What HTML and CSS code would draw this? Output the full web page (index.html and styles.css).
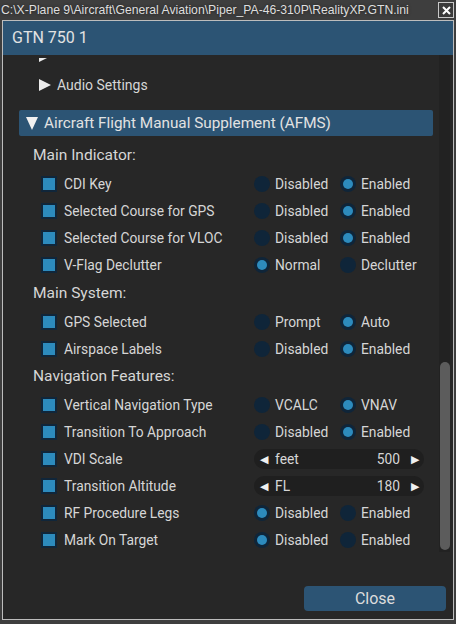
FILE: index.html
```html
<!DOCTYPE html>
<html lang="en">
<head>
    <meta charset="UTF-8">
    <meta name="viewport" content="width=device-width, initial-scale=1.0">
    <title>GTN 750 1</title>
    <link rel="stylesheet" href="styles.css">
</head>
<body>
    <div class="titlebar">
        <span class="path">C:\X-Plane 9\Aircraft\General Aviation\Piper_PA-46-310P\RealityXP.GTN.ini</span>
        <span class="winclose">
            <svg width="9" height="9" viewBox="0 0 9 9"><path d="M1 1 L8 8 M8 1 L1 8" stroke="#fff" stroke-width="2"/></svg>
        </span>
    </div>

    <div class="window">
        <div class="header">GTN 750 1</div>

        <div class="main">
            <div class="viewport">
                <div class="list">
                    <div class="tree-item"><span class="tri-right"></span></div>
                    <div class="tree-item"><span class="tri-right"></span>Audio Settings</div>

                    <div class="group-bar"><span class="tri-down"></span>Aircraft Flight Manual Supplement (AFMS)</div>

                    <div class="section first">Main Indicator:</div>
                    <div class="row">
                        <span class="check"></span><span class="label">CDI Key</span>
                        <span class="opt"><span class="radio"></span>Disabled</span>
                        <span class="opt"><span class="radio on"></span>Enabled</span>
                    </div>
                    <div class="row">
                        <span class="check"></span><span class="label">Selected Course for GPS</span>
                        <span class="opt"><span class="radio"></span>Disabled</span>
                        <span class="opt"><span class="radio on"></span>Enabled</span>
                    </div>
                    <div class="row">
                        <span class="check"></span><span class="label">Selected Course for VLOC</span>
                        <span class="opt"><span class="radio"></span>Disabled</span>
                        <span class="opt"><span class="radio on"></span>Enabled</span>
                    </div>
                    <div class="row">
                        <span class="check"></span><span class="label">V-Flag Declutter</span>
                        <span class="opt"><span class="radio on"></span>Normal</span>
                        <span class="opt"><span class="radio"></span>Declutter</span>
                    </div>

                    <div class="section">Main System:</div>
                    <div class="row">
                        <span class="check"></span><span class="label">GPS Selected</span>
                        <span class="opt"><span class="radio"></span>Prompt</span>
                        <span class="opt"><span class="radio on"></span>Auto</span>
                    </div>
                    <div class="row">
                        <span class="check"></span><span class="label">Airspace Labels</span>
                        <span class="opt"><span class="radio"></span>Disabled</span>
                        <span class="opt"><span class="radio on"></span>Enabled</span>
                    </div>

                    <div class="section">Navigation Features:</div>
                    <div class="row">
                        <span class="check"></span><span class="label">Vertical Navigation Type</span>
                        <span class="opt"><span class="radio"></span>VCALC</span>
                        <span class="opt"><span class="radio on"></span>VNAV</span>
                    </div>
                    <div class="row">
                        <span class="check"></span><span class="label">Transition To Approach</span>
                        <span class="opt"><span class="radio"></span>Disabled</span>
                        <span class="opt"><span class="radio on"></span>Enabled</span>
                    </div>
                    <div class="row">
                        <span class="check"></span><span class="label">VDI Scale</span>
                        <span class="spinner">
                            <span class="arrow">&#9664;</span><span class="unit">feet</span>
                            <span class="value">500</span><span class="arrow">&#9654;</span>
                        </span>
                    </div>
                    <div class="row">
                        <span class="check"></span><span class="label">Transition Altitude</span>
                        <span class="spinner">
                            <span class="arrow">&#9664;</span><span class="unit">FL</span>
                            <span class="value">180</span><span class="arrow">&#9654;</span>
                        </span>
                    </div>
                    <div class="row">
                        <span class="check"></span><span class="label">RF Procedure Legs</span>
                        <span class="opt"><span class="radio on"></span>Disabled</span>
                        <span class="opt"><span class="radio"></span>Enabled</span>
                    </div>
                    <div class="row">
                        <span class="check"></span><span class="label">Mark On Target</span>
                        <span class="opt"><span class="radio on"></span>Disabled</span>
                        <span class="opt"><span class="radio"></span>Enabled</span>
                    </div>
                </div>
            </div>
            <div class="scrollbar"><div class="thumb"></div></div>
        </div>

        <div class="footer">
            <button class="close">Close</button>
        </div>
    </div>
</body>
</html>
```

FILE: styles.css
```css
* {
    margin: 0;
    padding: 0;
    box-sizing: border-box;
}
body {
    background-color: #3e3e3e;
    width: 456px;
    height: 624px;
    overflow: hidden;
    font-family: Roboto, "Noto Sans", sans-serif;
    color: #d6d6d6;
}

/* barra do windows */
.titlebar {
    height: 20px;
    display: flex;
    align-items: center;
    justify-content: space-between;
    padding-left: 1px;
}
.path {
    font-family: "Liberation Sans", Arial, sans-serif;
    font-size: 12.2px;
    color: #dedede;
    text-shadow: 0 0 3px #222;
}
.winclose {
    width: 16px;
    height: 16px;
    margin-right: 2px;
    border: 1px solid #c8c8c8;
    background-color: #3a3a3a;
    display: flex;
    align-items: center;
    justify-content: center;
}

.window {
    margin: 0 2px;
    height: 600px;
    border: 1px solid #bdbdbd;
    background-color: #272727;
    display: flex;
    flex-direction: column;
}
.header {
    height: 34px;
    background-color: #2c5474;
    font-size: 16px;
    line-height: 34px;
    padding-left: 9px;
    color: #e2e2e2;
}

.main {
    height: 497px;
    display: flex;
}
.viewport {
    flex: 1;
    margin-top: 3px;
    overflow: hidden;
}
.list {
    margin-top: -17px;
}

.tree-item {
    height: 29px;
    display: flex;
    align-items: center;
    padding-left: 36px;
    font-size: 14px;
}
.tri-right {
    width: 0;
    height: 0;
    border-top: 6px solid transparent;
    border-bottom: 6px solid transparent;
    border-left: 12px solid #ececec;
    margin-right: 6px;
}
.group-bar {
    margin: 11px 6px 0 16px;
    height: 26px;
    background-color: #2c5474;
    border-radius: 2px;
    display: flex;
    align-items: center;
    padding-left: 7px;
    font-size: 15.3px;
    color: #e2e2e2;
}
.tri-down {
    width: 0;
    height: 0;
    border-left: 6.5px solid transparent;
    border-right: 6.5px solid transparent;
    border-top: 13px solid #f0f0f0;
    margin-right: 6px;
}

.section {
    height: 29.5px;
    line-height: 28px;
    padding-left: 30px;
    font-size: 15.5px;
}
.section.first {
    margin-top: 5px;
}

.row {
    height: 27px;
    display: flex;
    align-items: center;
    padding-left: 38px;
    font-size: 13.8px;
}
.check {
    width: 16px;
    height: 16px;
    border: 2px solid #10263a;
    background-color: #2d8bbd;
    margin-right: 7px;
}
.label {
    width: 190px;
}
.opt {
    width: 86px;
    display: flex;
    align-items: center;
}
.radio {
    width: 16px;
    height: 16px;
    border-radius: 50%;
    background-color: #0f2539;
    margin-right: 5px;
    display: flex;
    align-items: center;
    justify-content: center;
}
.radio.on::after {
    content: "";
    width: 10px;
    height: 10px;
    border-radius: 50%;
    background-color: #2d8bbd;
}

.spinner {
    width: 170px;
    height: 20px;
    border-radius: 10px;
    background-color: #1f1f1f;
    display: flex;
    align-items: center;
    padding: 0 5px 0 6px;
}
.arrow {
    font-size: 11px;
    color: #f0f0f0;
}
.unit {
    margin-left: 7px;
    flex: 1;
}
.value {
    margin-right: 11px;
}

.scrollbar {
    width: 11px;
    margin-right: 3px;
    background-color: #222222;
    display: flex;
    flex-direction: column;
    justify-content: flex-end;
    padding: 0 0 2px 1px;
}
.thumb {
    height: 188px;
    border-radius: 5px;
    background-color: #5c5c5c;
}

.footer {
    flex: 1;
    display: flex;
    justify-content: flex-end;
    align-items: flex-end;
    padding: 0 7px 8px 0;
}
.close {
    width: 142px;
    height: 25px;
    border: none;
    border-radius: 4px;
    background-color: #2c5474;
    color: #dcdcdc;
    font-family: Roboto, "Noto Sans", sans-serif;
    font-size: 16px;
}
```
